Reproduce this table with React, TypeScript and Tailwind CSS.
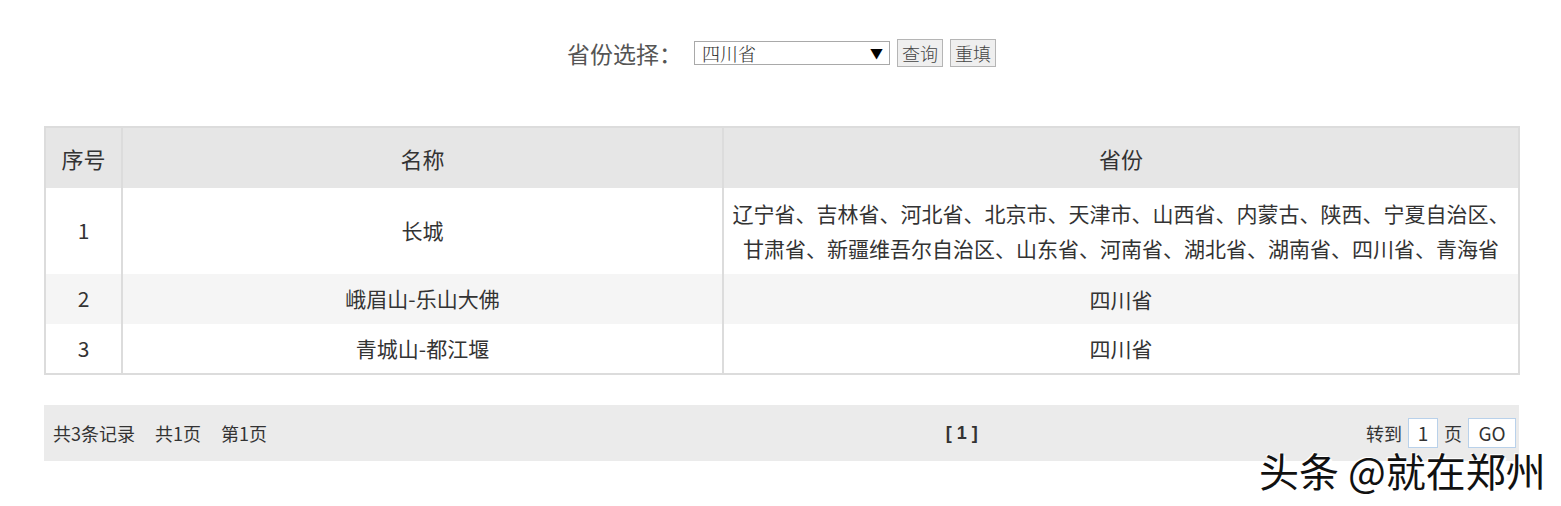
import React from "react";

const rows = [
  {
    id: 1,
    name: "长城",
    provinces:
      "辽宁省、吉林省、河北省、北京市、天津市、山西省、内蒙古、陕西、宁夏自治区、甘肃省、新疆维吾尔自治区、山东省、河南省、湖北省、湖南省、四川省、青海省",
  },
  { id: 2, name: "峨眉山-乐山大佛", provinces: "四川省" },
  { id: 3, name: "青城山-都江堰", provinces: "四川省" },
];

const font = "font-['Microsoft_YaHei','Noto_Sans_CJK_SC',sans-serif]";

export default function App() {
  return (
    <div className={`relative h-[506px] w-[1561px] overflow-hidden bg-white ${font}`}>
      {/* query bar */}
      <div className="flex h-[108px] items-center justify-center pb-[2px] pl-[2px]">
        <span className="text-[23px] text-[#555]">省份选择：</span>
        <div className="ml-[12px] flex h-[24px] w-[196px] items-center justify-between border border-[#a9a9a9] bg-white pl-[7px] pr-[6px] font-['Noto_Serif_CJK_SC','Noto_Sans_CJK_SC',serif] text-[18px] font-light text-[#333]">
          <span className="leading-none">四川省</span>
          <span className="text-[13px] text-black">▼</span>
        </div>
        <button className="ml-[7px] h-[28px] w-[46px] border border-[#b5b5b5] bg-[#efefef] text-[18px] font-light leading-none text-[#444]">
          查询
        </button>
        <button className="ml-[7px] h-[28px] w-[46px] border border-[#b5b5b5] bg-[#efefef] text-[18px] font-light leading-none text-[#444]">
          重填
        </button>
      </div>

      {/* data table */}
      <div className="mx-[44px] mt-[18px]">
        <table className="w-[1476px] table-fixed border-collapse border-2 border-[#dcdcdc] text-[21px] text-[#333]">
          <colgroup>
            <col className="w-[77px]" />
            <col className="w-[601px]" />
            <col />
          </colgroup>
          <thead>
            <tr className="h-[61px] bg-[#e6e6e6] text-[22px]">
              <th className="border-r-2 border-[#dcdcdc] font-normal">序号</th>
              <th className="border-r-2 border-[#dcdcdc] font-normal">名称</th>
              <th className="font-normal">省份</th>
            </tr>
          </thead>
          <tbody>
            {rows.map((r, i) => (
              <tr
                key={r.id}
                className={`${i === 0 ? "h-[86px]" : "h-[50px]"} ${i === 1 ? "bg-[#f5f5f5]" : "bg-white"}`}
              >
                <td className="border-r-2 border-[#dcdcdc] text-center">{r.id}</td>
                <td className="border-r-2 border-[#dcdcdc] text-center">{r.name}</td>
                <td className="px-[8px] text-center leading-[35px]">{r.provinces}</td>
              </tr>
            ))}
          </tbody>
        </table>
      </div>

      {/* pagination */}
      <div className="mx-[44px] mt-[30px] grid h-[56px] w-[1475px] grid-cols-3 items-center bg-[#ebebeb] pl-[9px] pr-[3px] text-[18px] text-[#333]">
        <div className="flex gap-[20px]">
          <span>共3条记录</span>
          <span>共1页</span>
          <span>第1页</span>
        </div>
        <div className="pl-[405px] font-['Liberation_Sans',sans-serif] text-[18px] font-bold">[ 1 ]</div>
        <div className="flex items-center justify-end gap-[6px]">
          <span>转到</span>
          <span className="flex h-[30px] w-[30px] items-center justify-center border border-[#b9d1ea] bg-white text-[19px]">
            1
          </span>
          <span>页</span>
          <span className="flex h-[30px] w-[48px] items-center justify-center border border-[#b9d1ea] bg-white text-[19px]">
            GO
          </span>
        </div>
      </div>

      {/* watermark */}
      <div className="absolute left-[1259px] top-[450px] text-[40px] leading-none text-[#111] [text-shadow:2px_2px_0_#fff,-1px_-1px_0_#fff]">
        头条 @就在郑州
      </div>
    </div>
  );
}
